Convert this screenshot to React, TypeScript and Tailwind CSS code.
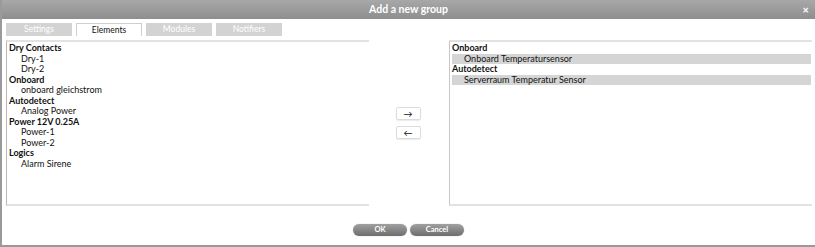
import React from "react";

const left: [string, boolean][] = [
  ["Dry Contacts", true],
  ["Dry-1", false],
  ["Dry-2", false],
  ["Onboard", true],
  ["onboard gleichstrom", false],
  ["Autodetect", true],
  ["Analog Power", false],
  ["Power 12V 0.25A", true],
  ["Power-1", false],
  ["Power-2", false],
  ["Logics", true],
  ["Alarm Sirene", false],
];

const right: [string, boolean][] = [
  ["Onboard", true],
  ["Onboard Temperatursensor", false],
  ["Autodetect", true],
  ["Serverraum Temperatur Sensor", false],
];

export default function App() {
  return (
    <div
      className="w-[815px] h-[247px] bg-white flex flex-col border-l-2 border-b-2 border-[#9a9a9a] text-[#111]"
      style={{ fontFamily: 'Lato, "Open Sans", sans-serif' }}
    >
      <div className="h-[19px] shrink-0 bg-gradient-to-b from-[#a8a8a8] to-[#8e8e8e] relative flex items-center justify-center">
        <span className="text-white text-[10.5px] font-bold">Add a new group</span>
        <span className="absolute right-[6px] top-[2px] text-white text-[11px] font-bold">×</span>
      </div>
      <div className="flex gap-[4px] pl-[4px] mt-[4px] h-[13px] shrink-0">
        <div className="w-[66px] bg-[#d3d3d3] text-white text-[8.5px] flex items-center justify-center">Settings</div>
        <div className="w-[66px] bg-white border border-b-0 border-[#cfcfcf] text-[8.5px] flex items-center justify-center">Elements</div>
        <div className="w-[66px] bg-[#d3d3d3] text-white text-[8.5px] flex items-center justify-center">Modules</div>
        <div className="w-[66px] bg-[#d3d3d3] text-white text-[8.5px] flex items-center justify-center">Notifiers</div>
      </div>
      <div className="flex mt-[4px] pl-[4px] pr-[3px] h-[166px] shrink-0">
        <div className="w-[363px] border-t-2 border-l border-b-2 border-[#e2e2e2] border-l-[#b8b8b8] pt-[1px] text-[9px] leading-[10.5px]">
          {left.map(([t, b], i) => (
            <div key={i} className={b ? "font-bold pl-[2px]" : "pl-[14px]"}>{t}</div>
          ))}
        </div>
        <div className="w-[80px] flex flex-col items-center justify-center gap-[6px] pr-[2px]">
          <div className="w-[25px] h-[13px] border border-[#dcdcdc] rounded-[2px] flex items-center justify-center text-[9px] shadow-[0_1px_1px_rgba(0,0,0,0.08)]">→</div>
          <div className="w-[25px] h-[13px] border border-[#dcdcdc] rounded-[2px] flex items-center justify-center text-[9px] shadow-[0_1px_1px_rgba(0,0,0,0.08)]">←</div>
        </div>
        <div className="flex-1 border-t-2 border-l border-b-2 border-[#e2e2e2] border-l-[#c8c8c8] pt-[1px] pr-[1px] text-[9px] leading-[10.5px]">
          {right.map(([t, b], i) => (
            <div key={i} className={b ? "font-bold pl-[2px]" : "bg-[#d5d5d5] ml-[2px] pl-[12px]"}>{t}</div>
          ))}
        </div>
      </div>
      <div className="flex-1 flex justify-center items-start pt-[18px] gap-[3px]">
        <div className="w-[54px] h-[12px] rounded-full bg-gradient-to-b from-[#a0a0a0] to-[#6e6e6e] text-white text-[7.5px] font-bold flex items-center justify-center shadow-[0_0_1px_rgba(0,0,0,0.4)]">OK</div>
        <div className="w-[54px] h-[12px] rounded-full bg-gradient-to-b from-[#a0a0a0] to-[#6e6e6e] text-white text-[7.5px] font-bold flex items-center justify-center shadow-[0_0_1px_rgba(0,0,0,0.4)]">Cancel</div>
      </div>
    </div>
  );
}
